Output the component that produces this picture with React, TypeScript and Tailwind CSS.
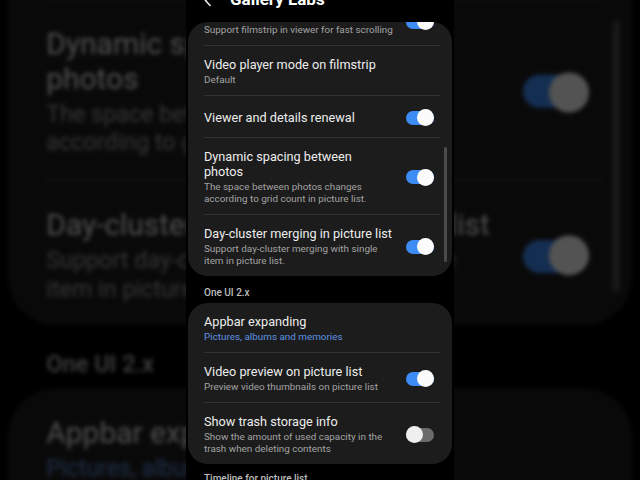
import React from 'react'

type Row = {
  title: string
  desc?: string[]
  blue?: boolean
  toggle?: 'on' | 'off'
}

const CARD_ONE: Row[] = [
  { title: 'Filmstrip in viewer', desc: ['Support filmstrip in viewer for fast scrolling'], toggle: 'on' },
  { title: 'Video player mode on filmstrip', desc: ['Default'] },
  { title: 'Viewer and details renewal', toggle: 'on' },
  {
    title: 'Dynamic spacing between photos',
    desc: ['The space between photos changes', 'according to grid count in picture list.'],
    toggle: 'on',
  },
  {
    title: 'Day-cluster merging in picture list',
    desc: ['Support day-cluster merging with single', 'item in picture list.'],
    toggle: 'on',
  },
]

const CARD_TWO: Row[] = [
  { title: 'Appbar expanding', desc: ['Pictures, albums and memories'], blue: true },
  { title: 'Video preview on picture list', desc: ['Preview video thumbnails on picture list'], toggle: 'on' },
  {
    title: 'Show trash storage info',
    desc: ['Show the amount of used capacity in the', 'trash when deleting contents'],
    toggle: 'off',
  },
]

function Toggle({ on }: { on: boolean }) {
  return (
    <div className="relative w-[28px] h-[14px] shrink-0">
      <div className={on ? 'w-full h-full rounded-full bg-[#3d8cf5]' : 'w-full h-full rounded-full bg-[#6b6b6b]'} />
      <div
        className={
          on
            ? 'absolute right-0 top-[-1.5px] w-[17px] h-[17px] rounded-full bg-[#fbfbfb]'
            : 'absolute left-0 top-[-1.5px] w-[17px] h-[17px] rounded-full bg-[#efefef]'
        }
      />
    </div>
  )
}

function SettingRow({ row, className = '' }: { row: Row; className?: string }) {
  const single = !row.desc
  return (
    <div
      className={`flex items-center pl-[16px] pr-[18px] pt-[11px] pb-[9px] ${single ? 'min-h-[41px]' : ''} ${className}`}
    >
      <div className="flex-1 min-w-0 pr-[8px]">
        <div className="text-[12.7px] leading-[15px] text-[#ededed]">
          {row.title === 'Dynamic spacing between photos' ? (
            <>
              Dynamic spacing between
              <br />
              photos
            </>
          ) : (
            row.title
          )}
        </div>
        {row.desc && (
          <div className={`mt-[2px] text-[9.9px] leading-[12px] ${row.blue ? 'text-[#5f92e3]' : 'text-[#a3a3a3]'}`}>
            {row.desc.map((d) => (
              <div key={d} className="whitespace-nowrap">
                {d}
              </div>
            ))}
          </div>
        )}
      </div>
      {row.toggle && <Toggle on={row.toggle === 'on'} />}
    </div>
  )
}

function Divider() {
  return <div className="h-px ml-[16px] mr-[12px] bg-[#323232]" />
}

function Screen() {
  return (
    <div className="w-[268px] h-[480px] bg-black overflow-hidden relative font-['Roboto','Noto_Sans',sans-serif]">
      {/* app bar, mostly scrolled off the top */}
      <div className="h-[22px] overflow-hidden">
        <div className="mt-[-21px] h-[42px] flex items-center pl-[18px] gap-[18px]">
          <svg width="8" height="13" viewBox="0 0 8 13" fill="none">
            <polyline points="6.5,1 1.5,6.5 6.5,12" stroke="#e6e6e6" strokeWidth="1.6" />
          </svg>
          <span className="text-[17px] font-bold text-white">Gallery Labs</span>
        </div>
      </div>

      <div className="mx-[2px] bg-[#1c1c1c] rounded-[20px] overflow-hidden relative">
        {CARD_ONE.map((row, i) => (
          <React.Fragment key={row.title}>
            {i > 0 && <Divider />}
            <SettingRow row={row} className={i === 0 ? 'mt-[-26px]' : ''} />
          </React.Fragment>
        ))}
        {/* scrollbar */}
        <div className="absolute right-[5px] top-[125px] w-[3px] h-[115px] rounded-full bg-[#4b4b4b]" />
      </div>

      <div className="pl-[18px] pt-[10px] pb-[4px] text-[10px] leading-[13px] font-medium text-[#bdbdbd]">
        One UI 2.x
      </div>

      <div className="mx-[2px] bg-[#1c1c1c] rounded-[20px] overflow-hidden">
        {CARD_TWO.map((row, i) => (
          <React.Fragment key={row.title}>
            {i > 0 && <Divider />}
            <SettingRow row={row} />
          </React.Fragment>
        ))}
      </div>

      <div className="pl-[18px] pt-[8px] text-[10px] leading-[13px] font-medium text-[#bdbdbd]">
        Timeline for picture list
      </div>
    </div>
  )
}

export default function App() {
  return (
    <div className="w-[640px] h-[480px] relative overflow-hidden bg-black">
      {/* blurred, zoomed backdrop */}
      <div className="absolute inset-0 flex justify-center">
        <div className="scale-[2.36] origin-center brightness-[0.33] blur-[0.8px]">
          <Screen />
        </div>
      </div>
      <div className="relative flex justify-center">
        <Screen />
      </div>
    </div>
  )
}
